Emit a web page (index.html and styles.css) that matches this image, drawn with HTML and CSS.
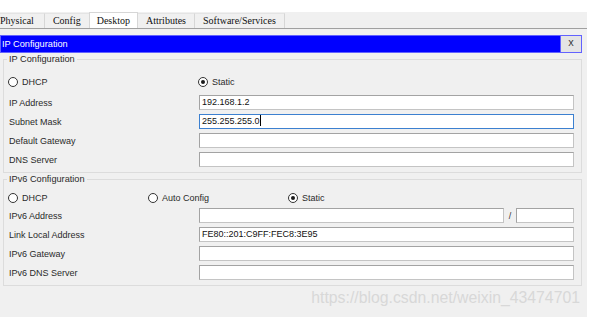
FILE: index.html
```html
<!DOCTYPE html>
<html>
<head>
<meta charset="utf-8">
<link rel="stylesheet" href="styles.css">
</head>
<body>
<div class="app">
  <div class="topband"></div>
  <div class="tabs">
    <div class="tab first">Physical</div>
    <div class="tab">Config</div>
    <div class="tab active">Desktop</div>
    <div class="tab">Attributes</div>
    <div class="tab">Software/Services</div>
  </div>
  <div class="titlebar">
    <span class="title">IP Configuration</span>
    <span class="close">x</span>
  </div>

  <fieldset class="group g1">
    <legend>IP Configuration</legend>
    <div class="radios two">
      <label class="radio"><span class="dot"></span>DHCP</label>
      <label class="radio"><span class="dot on"></span>Static</label>
    </div>
    <div class="row first-row"><span class="lbl">IP Address</span><div class="field">192.168.1.2</div></div>
    <div class="row"><span class="lbl">Subnet Mask</span><div class="field focus">255.255.255.0<span class="caret"></span></div></div>
    <div class="row"><span class="lbl">Default Gateway</span><div class="field"></div></div>
    <div class="row"><span class="lbl">DNS Server</span><div class="field"></div></div>
  </fieldset>

  <fieldset class="group g2">
    <legend>IPv6 Configuration</legend>
    <div class="radios three">
      <label class="radio"><span class="dot"></span>DHCP</label>
      <label class="radio"><span class="dot"></span>Auto Config</label>
      <label class="radio"><span class="dot on"></span>Static</label>
    </div>
    <div class="row first-row"><span class="lbl">IPv6 Address</span>
      <div class="split"><div class="field grow"></div><span class="slash">/</span><div class="field prefix"></div></div>
    </div>
    <div class="row"><span class="lbl">Link Local Address</span><div class="field">FE80::201:C9FF:FEC8:3E95</div></div>
    <div class="row"><span class="lbl">IPv6 Gateway</span><div class="field"></div></div>
    <div class="row"><span class="lbl">IPv6 DNS Server</span><div class="field"></div></div>
  </fieldset>

  <div class="watermark">https://blog.csdn.net/weixin_43474701</div>
</div>
</body>
</html>
```

FILE: styles.css
```css
html, body {
  margin: 0;
  padding: 0;
  background: #ffffff;
}
body {
  width: 589px;
  height: 317px;
  overflow: hidden;
  font-family: "Liberation Sans", Arial, sans-serif;
}
.app {
  width: 587px;
  height: 317px;
  background: #f0f0f0;
}
.topband {
  height: 12px;
  background: #ffffff;
}
.tabs {
  height: 16px;
  display: flex;
  align-items: flex-end;
  border-bottom: 1px solid #a0a0a0;
  margin-left: -8px;
  font-family: "Liberation Serif", "Times New Roman", serif;
  font-size: 10px;
  color: #111;
}
.tab {
  box-sizing: border-box;
  height: 15px;
  line-height: 14px;
  padding: 0 8px;
  border-right: 1px solid #d6d6d6;
  border-top: 1px solid #e4e4e4;
  background: #f0f0f0;
}
.tab.first {
  padding-right: 10px;
}
.tab.active {
  height: 16px;
  line-height: 15px;
  padding: 0 7px;
  background: #ffffff;
  border: 1px solid #d6d6d6;
  border-bottom: none;
  margin-left: -1px;
}
.titlebar {
  box-sizing: border-box;
  margin-top: 6px;
  width: 582px;
  height: 18px;
  display: flex;
  align-items: stretch;
  background: #0000ff;
  border: 1px solid #6262ff;
}
.title {
  flex: 1;
  color: #ffffff;
  font-size: 9.2px;
  line-height: 16px;
  padding-left: 1px;
}
.close {
  width: 20px;
  background: #e4e4e4;
  border-left: 1px solid #6262ff;
  color: #333;
  font-family: "Liberation Mono", monospace;
  font-size: 10px;
  line-height: 15px;
  text-align: center;
}
.group {
  margin: 1px 5px 0 3px;
  padding: 0 7px 5px 5px;
  border: 1px solid #dcdcdc;
  min-width: 0;
}
.group legend {
  font-size: 9.2px;
  line-height: 10px;
  height: 10px;
  padding: 0 2px;
  margin-left: -2px;
  color: #2a2a2a;
}
.radios {
  display: grid;
  height: 19px;
  align-items: center;
  margin-left: -1px;
  font-size: 9px;
  color: #2a2a2a;
}
.radios.two {
  grid-template-columns: 190px 1fr;
  margin-top: 8px;
}
.radios.three {
  grid-template-columns: 140px 140px 1fr;
  margin-top: 4px;
}
.radio {
  display: flex;
  align-items: center;
}
.dot {
  box-sizing: border-box;
  width: 10px;
  height: 10px;
  border: 1px solid #333;
  border-radius: 50%;
  background: #ffffff;
  margin-right: 4px;
  display: flex;
  align-items: center;
  justify-content: center;
}
.dot.on::after {
  content: "";
  width: 4px;
  height: 4px;
  border-radius: 50%;
  background: #1a1a1a;
}
.row {
  display: grid;
  grid-template-columns: 190px 1fr;
  align-items: center;
  height: 15px;
  margin-top: 4px;
  font-size: 9px;
  color: #2a2a2a;
}
.g1 .first-row {
  margin-top: 4px;
}
.g2 .first-row {
  margin-top: 1px;
}
.field {
  box-sizing: border-box;
  height: 15px;
  background: #ffffff;
  border: 1px solid #a3a3a3;
  border-right-color: #c4c4c4;
  border-bottom-color: #c4c4c4;
  padding: 0 2px;
  line-height: 13px;
  font-size: 9px;
  color: #111;
  white-space: nowrap;
}
.field.focus {
  border: 1px solid #3c80d0;
}
.caret {
  display: inline-block;
  width: 1px;
  height: 11px;
  background: #000;
  vertical-align: -2px;
}
.split {
  display: flex;
  align-items: center;
}
.field.grow {
  flex: 1;
}
.slash {
  width: 12px;
  text-align: center;
  font-size: 9px;
  color: #333;
}
.field.prefix {
  width: 58px;
}
.watermark {
  margin-top: 2px;
  padding-right: 7px;
  text-align: right;
  font-size: 15.8px;
  line-height: 19px;
  color: #d8d8d8;
}
```
